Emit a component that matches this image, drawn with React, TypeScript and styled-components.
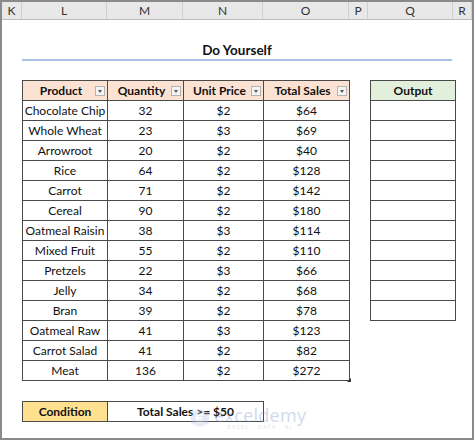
import React from "react";
import styled, { createGlobalStyle } from "styled-components";

const Global = createGlobalStyle`
  html, body { margin: 0; padding: 0; background: #fff; }
  body { font-family: Lato, "Open Sans", sans-serif; }
`;

const Frame = styled.div`
  width: 474px;
  height: 440px;
  box-sizing: border-box;
  border: 2px solid #8a8a8a;
  background: #fff;
  overflow: hidden;
  position: relative;
`;

const ColHeaders = styled.div`
  display: grid;
  grid-template-columns: 20px 85px 76px 80px 86px 19px 85px 19px;
  height: 17px;
  background: #e8e8e8;
  border-bottom: 1px solid #bdbdbd;
`;

const ColLetter = styled.div`
  display: flex;
  align-items: center;
  justify-content: center;
  font-size: 12px;
  color: #333;
  border-right: 1px solid #d0d0d0;
  box-sizing: border-box;
`;

const Sheet = styled.div`
  padding-left: 20px;
  display: flex;
  flex-direction: column;
`;

const TitleBlock = styled.div`
  width: 430px;
  height: 41px;
  box-sizing: border-box;
  display: flex;
  align-items: flex-end;
  justify-content: center;
  padding-bottom: 1px;
  border-bottom: 2px solid #a9c4e3;
  font-weight: 700;
  font-size: 13.5px;
  color: #111;
`;

const Tables = styled.div`
  margin-top: 19px;
  display: flex;
  align-items: flex-start;
  gap: 20px;
`;

const TableWrap = styled.div`
  position: relative;
`;

const Grid = styled.table<{ $w: number }>`
  width: ${(p) => p.$w}px;
  border-collapse: collapse;
  table-layout: fixed;
  font-size: 12px;
  color: #111;
`;

const Th = styled.th<{ $bg: string; $w: number }>`
  width: ${(p) => p.$w}px;
  height: 20px;
  box-sizing: border-box;
  padding: 0;
  background: ${(p) => p.$bg};
  border: 1px solid #4a4a4a;
  font-weight: 700;
  position: relative;
  text-align: center;
`;

const Td = styled.td`
  height: 20px;
  box-sizing: border-box;
  padding: 0;
  border: 1px solid #4a4a4a;
  text-align: center;
  white-space: nowrap;
  overflow: hidden;
`;

const HeadInner = styled.div<{ $shift: number }>`
  display: flex;
  align-items: center;
  justify-content: center;
  padding-right: ${(p) => p.$shift}px;
`;

const Filter = styled.span`
  position: absolute;
  right: 2px;
  top: 5px;
  width: 10px;
  height: 10px;
  box-sizing: border-box;
  border: 1px solid #b4b4b4;
  background: #f4f4f4;
  display: flex;
  align-items: center;
  justify-content: center;
  &::after {
    content: "";
    border-left: 2.5px solid transparent;
    border-right: 2.5px solid transparent;
    border-top: 3px solid #555;
    margin-top: 1px;
  }
`;

const Handle = styled.span`
  position: absolute;
  right: -1px;
  bottom: -1px;
  width: 0;
  height: 0;
  border-left: 4px solid transparent;
  border-bottom: 4px solid #333;
`;

const ConditionRow = styled.div`
  margin-top: 20px;
  display: flex;
  width: 242px;
  height: 21px;
  box-sizing: border-box;
  border: 1px solid #4a4a4a;
  font-size: 12px;
  font-weight: 700;
  color: #111;
`;

const CondLabel = styled.div`
  width: 84px;
  background: #ffe08f;
  border-right: 1px solid #4a4a4a;
  display: flex;
  align-items: center;
  justify-content: center;
`;

const CondValue = styled.div`
  flex: 1;
  display: flex;
  align-items: center;
  justify-content: center;
`;

const Watermark = styled.div`
  position: absolute;
  left: 187px;
  top: 404px;
  display: flex;
  align-items: center;
  gap: 3px;
  opacity: 0.35;
  pointer-events: none;
`;

const WmText = styled.div`
  display: flex;
  flex-direction: column;
  align-items: center;
  line-height: 1;
`;

const WmName = styled.span`
  font-family: "Open Sans", sans-serif;
  font-size: 18px;
  color: #7c93c4;
  letter-spacing: 0.3px;
`;

const WmSub = styled.span`
  font-family: "Open Sans", sans-serif;
  font-size: 5px;
  color: #9aa8c8;
  letter-spacing: 1.5px;
  margin-top: 1px;
`;

const rows: [string, number, string, string][] = [
  ["Chocolate Chip", 32, "$2", "$64"],
  ["Whole Wheat", 23, "$3", "$69"],
  ["Arrowroot", 20, "$2", "$40"],
  ["Rice", 64, "$2", "$128"],
  ["Carrot", 71, "$2", "$142"],
  ["Cereal", 90, "$2", "$180"],
  ["Oatmeal Raisin", 38, "$3", "$114"],
  ["Mixed Fruit", 55, "$2", "$110"],
  ["Pretzels", 22, "$3", "$66"],
  ["Jelly", 34, "$2", "$68"],
  ["Bran", 39, "$2", "$78"],
  ["Oatmeal Raw", 41, "$3", "$123"],
  ["Carrot Salad", 41, "$2", "$82"],
  ["Meat", 136, "$2", "$272"],
];

const letters: string[] = ["K", "L", "M", "N", "O", "P", "Q", "R"];

const heads: { label: string; w: number }[] = [
  { label: "Product", w: 85 },
  { label: "Quantity", w: 76 },
  { label: "Unit Price", w: 80 },
  { label: "Total Sales", w: 86 },
];

export default function App() {
  return (
    <Frame>
      <Global />
      <ColHeaders>
        {letters.map((l) => (
          <ColLetter key={l}>{l}</ColLetter>
        ))}
      </ColHeaders>
      <Sheet>
        <TitleBlock>Do Yourself</TitleBlock>
        <Tables>
          <TableWrap>
            <Grid $w={328}>
              <thead>
                <tr>
                  {heads.map((h) => (
                    <Th key={h.label} $bg="#fbe2d3" $w={h.w}>
                      <HeadInner $shift={8}>{h.label}</HeadInner>
                      <Filter />
                    </Th>
                  ))}
                </tr>
              </thead>
              <tbody>
                {rows.map((r) => (
                  <tr key={r[0]}>
                    <Td>{r[0]}</Td>
                    <Td>{r[1]}</Td>
                    <Td>{r[2]}</Td>
                    <Td>{r[3]}</Td>
                  </tr>
                ))}
              </tbody>
            </Grid>
            <Handle />
          </TableWrap>
          <Grid $w={85}>
            <thead>
              <tr>
                <Th $bg="#e2efda" $w={85}>
                  <HeadInner $shift={0}>Output</HeadInner>
                </Th>
              </tr>
            </thead>
            <tbody>
              {Array.from({ length: 11 }).map((_, i) => (
                <tr key={i}>
                  <Td />
                </tr>
              ))}
            </tbody>
          </Grid>
        </Tables>
        <ConditionRow>
          <CondLabel>Condition</CondLabel>
          <CondValue>Total Sales &gt;= $50</CondValue>
        </ConditionRow>
      </Sheet>
      <Watermark>
        <svg width="22" height="20" viewBox="0 0 20 18">
          <path d="M2 4 L10 1 L18 4 L18 14 L10 17 L2 14 Z" fill="#b7c4e2" />
          <path d="M7 6 L13 6 M7 9 L12 9 M7 12 L13 12 M7 6 L7 12" stroke="#fff" strokeWidth="1.6" fill="none" />
        </svg>
        <WmText>
          <WmName>exceldemy</WmName>
          <WmSub>EXCEL · DATA · BI</WmSub>
        </WmText>
      </Watermark>
    </Frame>
  );
}
